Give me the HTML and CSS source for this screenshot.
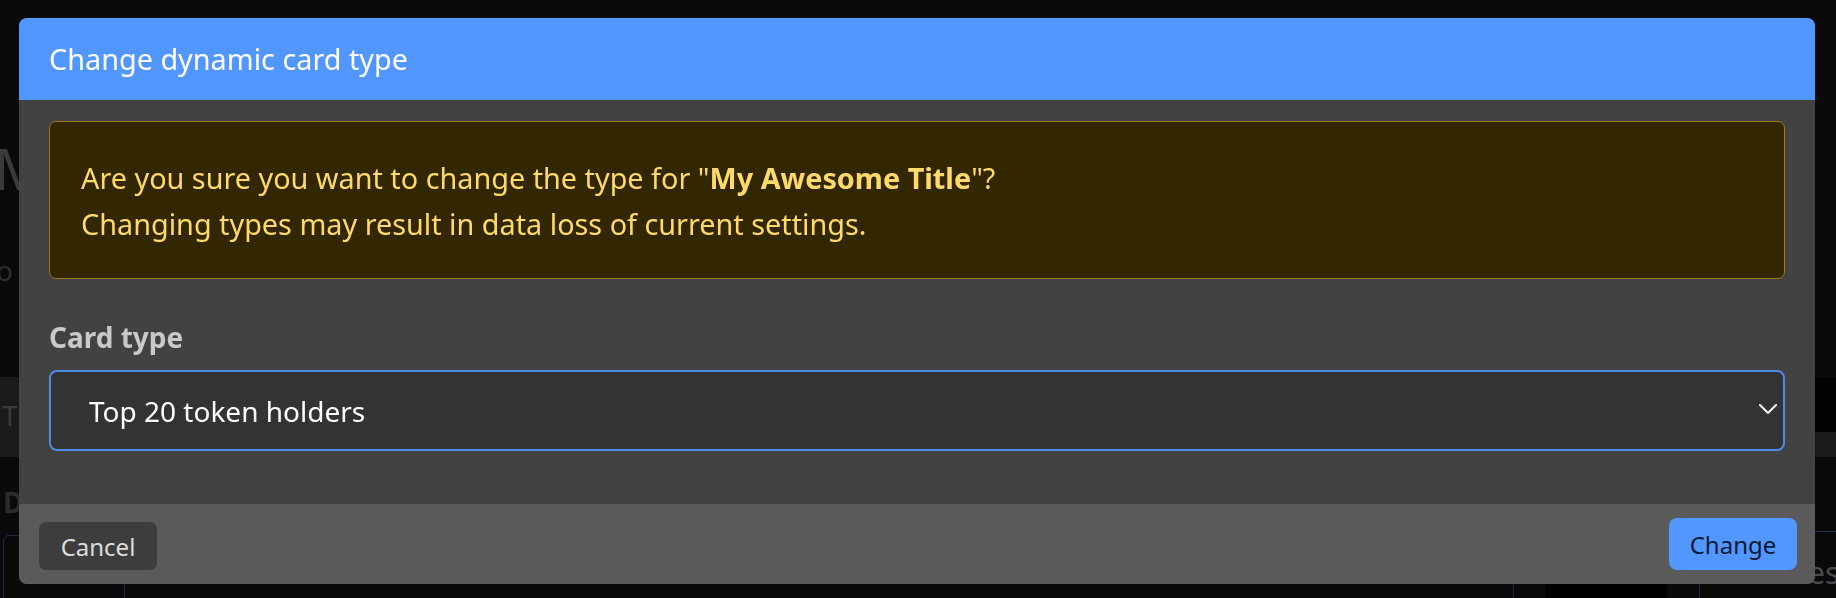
FILE: index.html
```html
<!DOCTYPE html>
<html lang="en">
<head>
<meta charset="utf-8">
<title>Change dynamic card type</title>
<link rel="stylesheet" href="styles.css">
</head>
<body>
<div class="page">
  <div class="bg-heading">M</div>
  <div class="bg-sub">o</div>
  <div class="bg-band"><span class="bg-band-text">T</span><span class="bg-band-end"></span></div>
  <div class="bg-d">D</div>
  <div class="bg-box-left"></div>
  <div class="bg-line-right"></div>
  <div class="bg-es">es</div>
  <div class="bg-col bg-col-a"></div>
  <div class="bg-col bg-col-b"></div>
  <div class="bg-blk"></div>
</div>

<div class="overlay">
  <div class="modal" role="dialog">
    <div class="modal-header">
      <h5 class="modal-title">Change dynamic card type</h5>
    </div>
    <div class="modal-body">
      <div class="alert">
        <p class="alert-line">Are you sure you want to change the type for "<strong>My Awesome Title</strong>"?</p>
        <p class="alert-line">Changing types may result in data loss of current settings.</p>
      </div>
      <label class="form-label">Card type</label>
      <div class="select">
        <span class="select-value">Top 20 token holders</span>
        <svg class="chevron" width="18" height="10" viewBox="0 0 18 10"><polyline points="1,1 9,9 17,1" fill="none" stroke="#ffffff" stroke-width="2" stroke-linecap="round" stroke-linejoin="round"/></svg>
      </div>
    </div>
    <div class="modal-footer">
      <button class="btn btn-cancel">Cancel</button>
      <button class="btn btn-change">Change</button>
    </div>
  </div>
</div>
</body>
</html>
```
FILE: styles.css
```css
html, body {
  margin: 0;
  padding: 0;
  height: 100%;
}

body {
  background: #0a0a0a;
  font-family: "Noto Sans", "Open Sans", sans-serif;
  overflow: hidden;
}

.page {
  position: relative;
  width: 1836px;
  height: 598px;
}

.bg-heading {
  position: absolute;
  left: -6px;
  top: 140px;
  font-size: 56px;
  color: #3a3a3a;
  line-height: 1;
}

.bg-sub {
  position: absolute;
  left: -4px;
  top: 256px;
  font-size: 28px;
  color: #2e2e2e;
  line-height: 1;
}

.bg-band {
  position: absolute;
  left: 0;
  top: 377px;
  width: 1836px;
  height: 80px;
  background: #1a1a1a;
}

.bg-band-end {
  position: absolute;
  left: 1815px;
  top: 0;
  width: 21px;
  height: 55px;
  background: #030303;
}

.bg-band-text {
  position: absolute;
  left: 2px;
  top: 24px;
  font-size: 28px;
  color: #3a3a3a;
  line-height: 1;
}

.bg-d {
  position: absolute;
  left: 3px;
  top: 488px;
  font-size: 28px;
  font-weight: 700;
  color: #2c2c2c;
  line-height: 1;
}

.bg-box-left {
  position: absolute;
  left: 3px;
  top: 535px;
  width: 120px;
  height: 80px;
  border: 1px solid #1c2c50;
  border-radius: 6px;
}

.bg-line-right {
  position: absolute;
  left: 1815px;
  top: 531px;
  width: 30px;
  height: 1px;
  background: #1d2d52;
}

.bg-es {
  position: absolute;
  left: 1808px;
  top: 558px;
  font-size: 30px;
  color: #4a4a4a;
  line-height: 1;
}

.bg-col {
  position: absolute;
  top: 584px;
  width: 1px;
  height: 20px;
  background: #1d2d52;
}

.bg-col-a { left: 1513px; }
.bg-col-b { left: 1699px; }

.bg-blk {
  position: absolute;
  left: 1545px;
  top: 584px;
  width: 122px;
  height: 20px;
  background: #000;
}

.overlay {
  position: fixed;
  inset: 0;
  padding: 18px 21px 0 19px;
  box-sizing: border-box;
}

.modal {
  width: 1796px;
  border-radius: 8px;
  overflow: hidden;
  background: #424242;
  display: flex;
  flex-direction: column;
}

.modal-header {
  height: 82px;
  background: #5296ff;
  display: flex;
  align-items: center;
  padding: 0 30px;
  box-sizing: border-box;
}

.modal-title {
  margin: 0;
  font-size: 28.8px;
  font-weight: 400;
  color: #ffffff;
  line-height: 1.2;
}

.modal-body {
  padding: 21px 30px 53px 30px;
  display: flex;
  flex-direction: column;
}

.alert {
  height: 158px;
  box-sizing: border-box;
  background: #332701;
  border: 1px solid #9c7a10;
  border-radius: 7px;
  padding: 33px 31px;
  color: #ffda6a;
  font-size: 28.8px;
}

.alert-line {
  margin: 0;
  line-height: 46px;
}

.alert strong {
  font-weight: 700;
}

.form-label {
  margin-top: 40px;
  font-size: 28px;
  font-weight: 700;
  color: #c9c9c9;
  line-height: 36px;
}

.select {
  margin-top: 15px;
  height: 81px;
  box-sizing: border-box;
  border: 2px solid #4f8ae6;
  border-radius: 8px;
  background: #333333;
  display: flex;
  align-items: center;
  justify-content: space-between;
  padding: 0 6px 0 38px;
}

.select-value {
  font-size: 28px;
  color: #ffffff;
}

.chevron {
  display: block;
  margin-top: -3px;
}

.modal-footer {
  height: 80px;
  background: #5a5a5a;
  display: flex;
  align-items: center;
  justify-content: space-between;
  padding: 0 18px 0 20px;
}

.btn {
  font-family: "Noto Sans", "Open Sans", sans-serif;
  border: none;
  cursor: pointer;
  font-size: 24px;
}

.btn-cancel {
  height: 48px;
  width: 118px;
  margin-top: 4px;
  background: #3d3d3d;
  color: #dddddd;
  border-radius: 7px;
}

.btn-change {
  height: 52px;
  width: 128px;
  background: #5296ff;
  color: #0a1a33;
  border-radius: 8px;
}
```
